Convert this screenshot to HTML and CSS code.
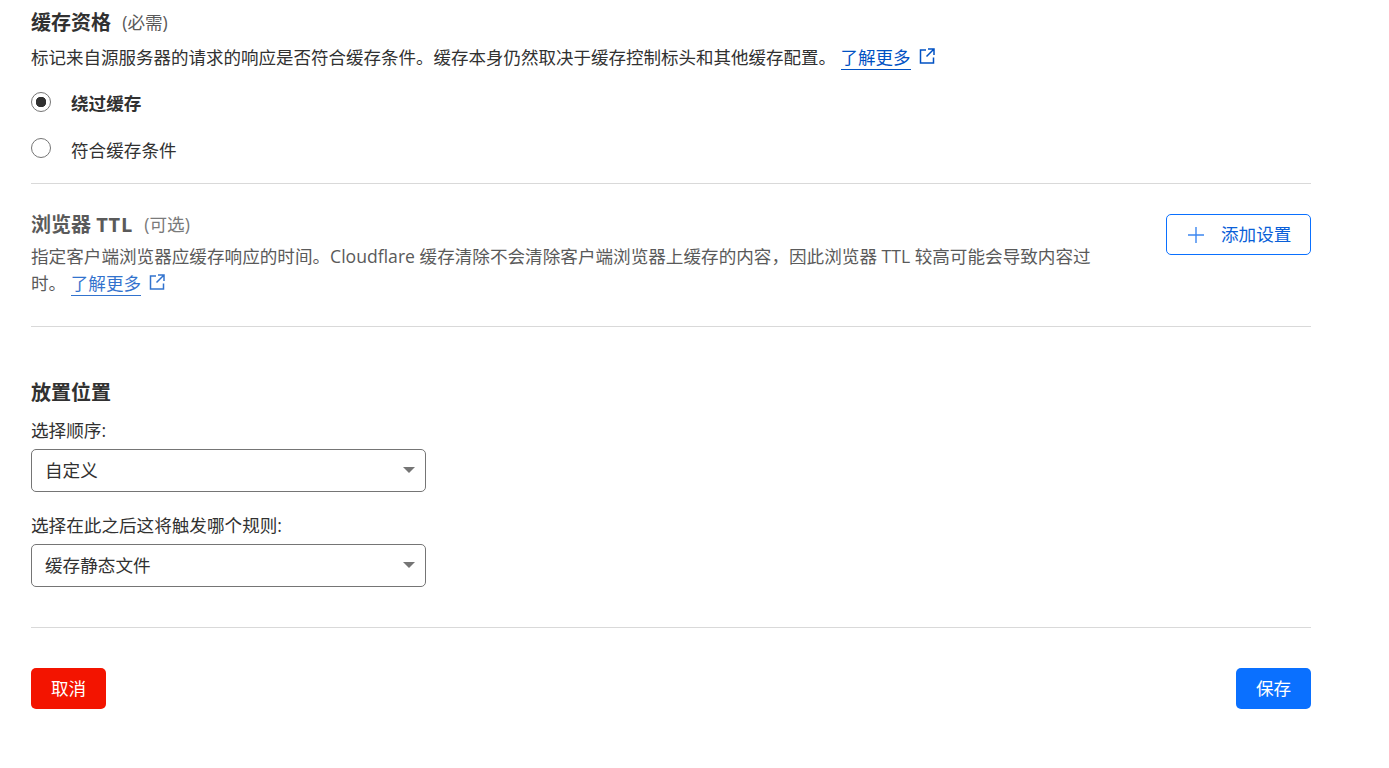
FILE: index.html
```html
<!DOCTYPE html>
<html lang="zh-CN">
<head>
<meta charset="utf-8">
<title>缓存规则</title>
<link rel="stylesheet" href="styles.css">
</head>
<body>
<main class="page">
  <section class="cache-section">
    <h2 class="title">缓存资格 <span class="hint">(必需)</span></h2>
    <p class="desc">标记来自源服务器的请求的响应是否符合缓存条件。缓存本身仍然取决于缓存控制标头和其他缓存配置。 <a class="link" href="#">了解更多</a><svg class="ext" viewBox="0 0 18 18"><path d="M8 3H2.5v13h13v-5.5M10 2h6v6M16 2L8.5 9.5"/></svg></p>
    <label class="radio radio-on"><span class="dot"></span><span>绕过缓存</span></label>
    <label class="radio radio-off"><span class="dot"></span><span>符合缓存条件</span></label>
  </section>
  <section class="ttl-section">
    <div class="ttl-text">
      <h2 class="title">浏览器 <span class="latin">TTL</span> <span class="hint">(可选)</span></h2>
      <p class="desc">指定客户端浏览器应缓存响应的时间。Cloudflare 缓存清除不会清除客户端浏览器上缓存的内容，因此浏览器 TTL 较高可能会导致内容过时。 <a class="link" href="#">了解更多</a><svg class="ext" viewBox="0 0 18 18"><path d="M8 3H2.5v13h13v-5.5M10 2h6v6M16 2L8.5 9.5"/></svg></p>
    </div>
    <button class="add-btn" type="button"><svg class="plus" viewBox="0 0 16 16"><path d="M8 0v16M0 8h16"/></svg><span>添加设置</span></button>
  </section>
  <section class="place-section">
    <h2 class="title">放置位置</h2>
    <div class="label">选择顺序:</div>
    <div class="select"><span>自定义</span><i class="caret"></i></div>
    <div class="label label-second">选择在此之后这将触发哪个规则:</div>
    <div class="select"><span>缓存静态文件</span><i class="caret"></i></div>
  </section>
  <footer class="actions">
    <button class="btn btn-cancel" type="button">取消</button>
    <button class="btn btn-save" type="button">保存</button>
  </footer>
</main>
</body>
</html>
```
FILE: styles.css
```css
* { box-sizing: border-box; }
html, body { margin: 0; padding: 0; background: #fff; }
body {
  font-family: "Open Sans", "Noto Sans CJK SC", sans-serif;
  font-size: 17.6px;
  color: #313131;
  height: 768px;
  overflow: hidden;
}
.page { width: 1280px; margin-left: 31px; }
.title {
  margin: 0;
  height: 26px;
  font-size: 20px;
  line-height: 26px;
  font-weight: 700;
  color: #313131;
}
.hint { font-size: 17.6px; font-weight: 400; color: #595959; margin-left: 6px; vertical-align: 1px; }
.latin { letter-spacing: .8px; }
.desc { margin: 0; line-height: 26px; font-size: 17.5px; }
.link { color: #0051c3; text-decoration: none; border-bottom: 1px solid #0051c3; margin-left: 0; }
.ext {
  width: 18px; height: 18px; margin-left: 7px; vertical-align: -1px;
  fill: none; stroke: #0051c3; stroke-width: 1.5;
}
.cache-section { height: 184px; padding-top: 9px; border-bottom: 1px solid #d9d9d9; }
.cache-section .desc { margin-top: 9px; }
.radio { display: flex; align-items: center; gap: 20px; height: 26px; }
.radio-on { margin-top: 19px; font-weight: 700; }
.radio-off { margin-top: 21px; }
.dot {
  width: 20px; height: 20px; border-radius: 50%;
  border: 1px solid #757575; background: #fff;
}
.radio-off .dot { margin-top: -2px; }
.radio-on .dot { background: radial-gradient(circle, #313131 0 5px, #fff 5.5px); }
.ttl-section {
  height: 143px; padding-top: 27px; border-bottom: 1px solid #d9d9d9;
  display: flex; justify-content: space-between; align-items: flex-start;
}
.ttl-text { width: 1062px; opacity: .8; }
.ttl-section .desc { margin-top: 6px; line-height: 27px; font-size: 17.6px; }
.add-btn {
  width: 145px; height: 41px; margin-top: 3px;
  display: flex; align-items: center; gap: 17px; padding: 0 0 2px 21px;
  border: 1px solid #0a70ff; border-radius: 5px; background: #fff;
  color: #0a5fd8; font: inherit;
}
.plus { width: 16px; height: 16px; fill: none; stroke: #3c87f0; stroke-width: 1.4; margin-top: 2px; }
.place-section { height: 301px; padding-top: 53px; border-bottom: 1px solid #d9d9d9; }
.label { margin-top: 11px; line-height: 26px; }
.label-second { margin-top: 20px; }
.select {
  width: 395px; height: 43px; margin-top: 6px;
  display: flex; align-items: center; justify-content: space-between;
  padding: 0 10px 2px 13px;
  border: 1px solid #757575; border-radius: 5px; background: #fff;
}
.caret {
  width: 0; height: 0;
  border-left: 6px solid transparent; border-right: 6px solid transparent;
  border-top: 6px solid #757575;
}
.actions { display: flex; justify-content: space-between; margin-top: 40px; }
.btn {
  width: 75px; height: 41px; border: 0; border-radius: 5px; padding: 0 0 2px;
  color: #fff; font: inherit;
}
.btn-cancel { background: #f31400; }
.btn-save { background: #0a70ff; }
```
